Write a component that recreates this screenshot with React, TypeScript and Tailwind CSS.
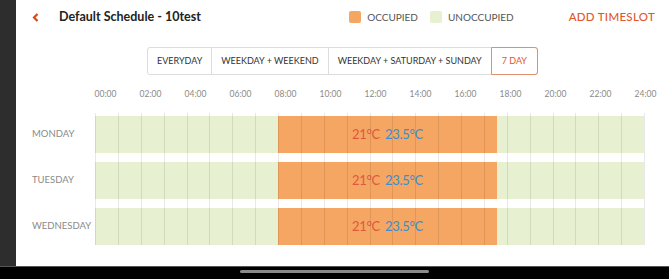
import React from "react";

const hours = Array.from({ length: 25 }, (_, i) => i);
const labels = ["00:00", "02:00", "04:00", "06:00", "08:00", "10:00", "12:00", "14:00", "16:00", "18:00", "20:00", "22:00", "24:00"];
const days = ["MONDAY", "TUESDAY", "WEDNESDAY"];
const tabs = ["EVERYDAY", "WEEKDAY + WEEKEND", "WEEKDAY + SATURDAY + SUNDAY"];

const HOUR = 549 / 24;

const DayRow = ({ day }: { day: string }) => (
  <div className="flex items-center h-[37px]">
    <div className="w-[63px] text-[9.5px] text-[#8a8a8a]">{day}</div>
    <div className="flex w-[549px] h-full">
      <div className="w-[183px] bg-[#e7f0d0]" />
      <div className="w-[219px] bg-[#f4a662] flex items-center justify-center gap-[5px] text-[13px] tracking-[-0.3px]">
        <span className="text-[#e2573f]">21°C</span>
        <span className="text-[#3a8dd6]">23.5°C</span>
      </div>
      <div className="flex-1 bg-[#e7f0d0]" />
    </div>
  </div>
);

export default function App() {
  return (
    <div className="w-[669px] h-[279px] flex flex-col bg-black font-['Lato','Noto_Sans',sans-serif] overflow-hidden">
      <div className="flex h-[266px]">
        <div className="w-[16px] bg-[#2d2d2d]" />
        <div className="flex-1 bg-white flex flex-col">
          {/* header */}
          <div className="flex items-center h-[34px] pl-[16px] pr-[14px]">
            <svg width="7" height="9" viewBox="0 0 7 9" className="mt-[1px]">
              <polyline points="5.5,1 2,4.5 5.5,8" fill="none" stroke="#d9480f" strokeWidth="2.2" />
            </svg>
            <h1 className="ml-[20px] text-[12.5px] font-bold text-[#222]">Default Schedule - 10test</h1>
            <div className="ml-auto flex items-center">
              <span className="w-[12px] h-[12px] rounded-[2px] bg-[#f5a662]" />
              <span className="ml-[6px] text-[10px] text-[#555]">OCCUPIED</span>
              <span className="ml-[12px] w-[12px] h-[12px] rounded-[2px] bg-[#e7f0d0]" />
              <span className="ml-[6px] text-[10px] text-[#555]">UNOCCUPIED</span>
            </div>
            <button className="ml-[55px] text-[11.5px] font-medium text-[#e0582a] tracking-wide">ADD TIMESLOT</button>
          </div>

          {/* tabs */}
          <div className="flex justify-center mt-[13px]">
            <div className="flex h-[28px] rounded-[3px] border border-[#dcdcdc] text-[9px] text-[#333]">
              {tabs.map((t, i) => (
                <div key={t} className={`px-[9px] flex items-center ${i > 0 ? "border-l border-[#dcdcdc]" : ""}`}>
                  {t}
                </div>
              ))}
              <div className="-my-px -mr-px px-[10px] flex items-center border border-[#e0906a] rounded-r-[3px] text-[#e0582a]">
                7 DAY
              </div>
            </div>
          </div>

          {/* time labels */}
          <div className="flex mt-[13px] ml-[67px] text-[8.5px] text-[#8a8a8a]">
            {labels.map((l) => (
              <div key={l} className="w-[45px] text-center">{l}</div>
            ))}
          </div>

          {/* chart */}
          <div className="relative mt-[12px] ml-[16px] pt-[3px] flex flex-col gap-[9px]">
            {days.map((d) => (
              <DayRow key={d} day={d} />
            ))}
            <div className="absolute top-0 bottom-0 left-[63px] w-[550px] pointer-events-none">
              {hours.map((h) => (
                <div
                  key={h}
                  className="absolute top-0 bottom-0 w-px bg-black/[0.09]"
                  style={{ left: Math.round(h * HOUR) }}
                />
              ))}
            </div>
          </div>
        </div>
      </div>
      <div className="flex-1 border-t border-[#555] flex justify-center pt-[3px]">
        <div className="w-[189px] h-[3px] rounded-full bg-[#8a8a8a]" />
      </div>
    </div>
  );
}
